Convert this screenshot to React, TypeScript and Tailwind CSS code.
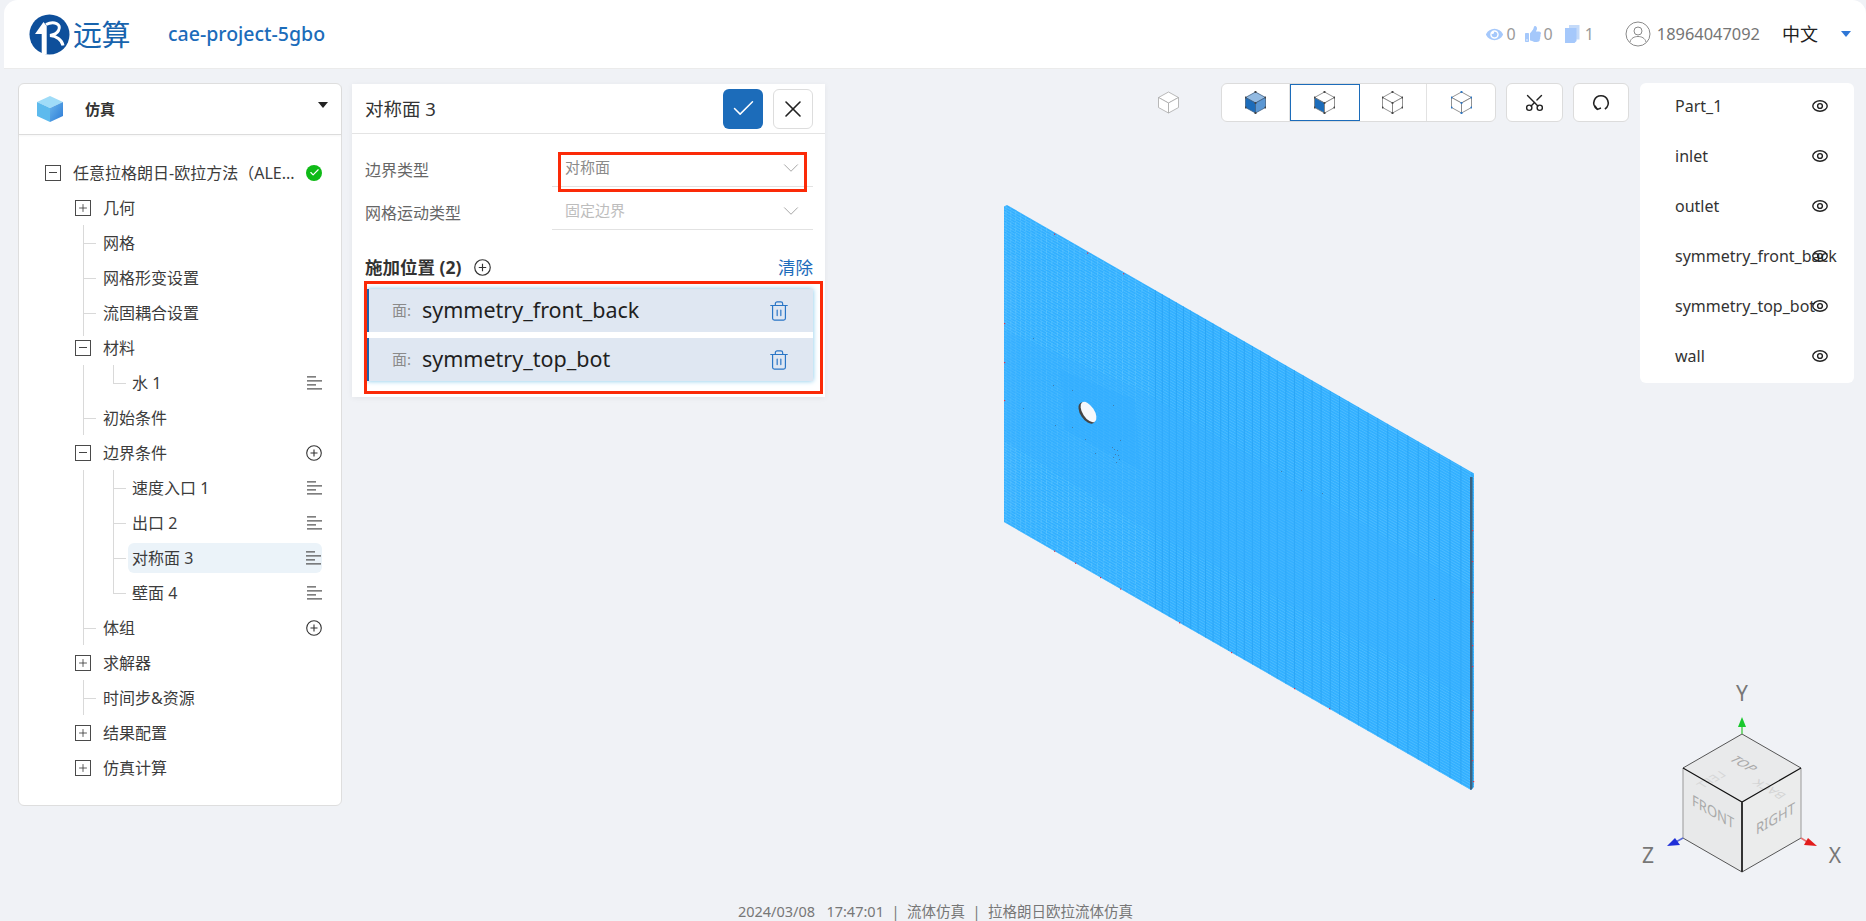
import { Check, ChevronDown, Plus, Scissors, Trash2, X } from "lucide-react";
import { FaEye, FaThumbsUp } from "react-icons/fa";
import type { ReactNode } from "react";

const FONT = "font-['Noto_Sans','Noto_Sans_CJK_SC',sans-serif]";

const Toggle = ({ open }: { open?: boolean }) => (
  <span className="relative flex h-[16px] w-[16px] shrink-0 items-center justify-center border-[1.5px] border-[#4a4a4a] bg-white">
    {open ? <Minus /> : <PlusMark />}
  </span>
);
const Minus = () => <span className="h-[1.5px] w-[8px] bg-[#444]" />;
const PlusMark = () => <Plus size={12} strokeWidth={1.6} className="text-[#333]" />;

const MenuIcon = () => (
  <svg width="15" height="14" viewBox="0 0 15 14" className="shrink-0">
    <path d="M0 .8h9M0 4.8h15M0 8.8h9M0 12.8h15" stroke="#555" strokeWidth="1.2" fill="none" />
  </svg>
);

const PlusCircle = ({ size = 16 }: { size?: number }) => (
  <svg width={size} height={size} viewBox="0 0 16 16" className="shrink-0">
    <circle cx="8" cy="8" r="7.3" fill="none" stroke="#333" strokeWidth="1.1" />
    <path d="M8 4.5v7M4.5 8h7" stroke="#333" strokeWidth="1.1" />
  </svg>
);

type RowProps = {
  pad: string;
  children: ReactNode;
  toggle?: "open" | "closed";
  right?: ReactNode;
  guides?: ReactNode;
};

// one line of the tree, guides are the thin connector lines
function Row({ pad, children, toggle, right, guides }: RowProps) {
  return (
    <div className={`relative flex h-[35px] items-center pr-[19px] text-[16px] text-[#3c3c3c] ${pad}`}>
      {guides}
      {toggle && (
        <span className="mr-[12px]">
          <Toggle open={toggle === "open"} />
        </span>
      )}
      <span className="whitespace-nowrap">{children}</span>
      {right && <span className="ml-auto flex items-center">{right}</span>}
    </div>
  );
}

const Line1 = () => <span className="absolute left-[64px] top-0 h-full w-px bg-[#d9d9d9]" />;
const Line2 = () => <span className="absolute left-[94px] top-0 h-full w-px bg-[#d9d9d9]" />;
const Line2Half = () => <span className="absolute left-[94px] top-0 h-1/2 w-px bg-[#d9d9d9]" />;
const Tick1 = () => <span className="absolute left-[64px] top-1/2 h-px w-[13px] bg-[#d9d9d9]" />;
const Tick2 = () => <span className="absolute left-[94px] top-1/2 h-px w-[13px] bg-[#d9d9d9]" />;

function Tree() {
  return (
    <div className="pt-[20px]">
      <Row
        pad="pl-[26px]"
        toggle="open"
        right={
          <span className="flex h-[16px] w-[16px] items-center justify-center rounded-full bg-[#0fba17]">
            <Check size={11} strokeWidth={2.5} className="text-white" />
          </span>
        }
      >
        任意拉格朗日-欧拉方法（ALE...
      </Row>
      <Row pad="pl-[56px]" toggle="closed">几何</Row>
      <Row pad="pl-[84px]" guides={<><Line1 /><Tick1 /></>}>网格</Row>
      <Row pad="pl-[84px]" guides={<><Line1 /><Tick1 /></>}>网格形变设置</Row>
      <Row pad="pl-[84px]" guides={<><Line1 /><Tick1 /></>}>流固耦合设置</Row>
      <Row pad="pl-[56px]" toggle="open" guides={<span className="absolute left-[64px] top-0 h-[6px] w-px bg-[#d9d9d9]" />}>材料</Row>
      <Row pad="pl-[113px]" right={<MenuIcon />} guides={<><Line1 /><Line2Half /><Tick2 /></>}>水 1</Row>
      <Row pad="pl-[84px]" guides={<><Line1 /><Tick1 /></>}>初始条件</Row>
      <Row pad="pl-[56px]" toggle="open" right={<PlusCircle />}>边界条件</Row>
      <Row pad="pl-[113px]" right={<MenuIcon />} guides={<><Line1 /><Line2 /><Tick2 /></>}>速度入口 1</Row>
      <Row pad="pl-[113px]" right={<MenuIcon />} guides={<><Line1 /><Line2 /><Tick2 /></>}>出口 2</Row>
      <div className="relative flex h-[35px] items-center">
        <Line1 />
        <Line2 />
        <Tick2 />
        <div className="ml-[109px] flex h-[30px] w-[194px] items-center justify-between rounded-[6px] bg-[#ebf3f9] pl-[4px] pr-[1px] text-[16px] text-[#3c3c3c]">
          对称面 3
          <MenuIcon />
        </div>
      </div>
      <Row pad="pl-[113px]" right={<MenuIcon />} guides={<><Line1 /><Line2Half /><Tick2 /></>}>壁面 4</Row>
      <Row pad="pl-[84px]" right={<PlusCircle />} guides={<><Line1 /><Tick1 /></>}>体组</Row>
      <Row pad="pl-[56px]" toggle="closed">求解器</Row>
      <Row pad="pl-[84px]" guides={<><Line1 /><Tick1 /></>}>时间步&amp;资源</Row>
      <Row pad="pl-[56px]" toggle="closed">结果配置</Row>
      <Row pad="pl-[56px]" toggle="closed">仿真计算</Row>
    </div>
  );
}

const Logo = () => (
  <svg width="41" height="41" viewBox="0 0 41 41" className="shrink-0">
    <circle cx="20.5" cy="20.5" r="20" fill="#0e4f9b" />
    <path d="M14.5 8 6 20h6.700v20.500h5V12z" fill="#fff" />
    <path d="M17 10.500c8-4 16-.5 12.500 6-1.500 3-5 4.500-8.500 5 6 .5 12 4 13 10" fill="none" stroke="#fff" strokeWidth="3" />
  </svg>
);

function Header() {
  return (
    <header className="ml-[4px] flex h-[69px] shrink-0 items-center rounded-t-[14px] border-b border-[#ebebeb] bg-white pl-[25px] pr-[15px]">
      <Logo />
      <span className="ml-[3px] text-[29px] leading-none tracking-[-0.5px] text-[#1763ad]">远算</span>
      <span className="ml-[38px] text-[19.500px] font-medium text-[#1c6cba]">cae-project-5gbo</span>
      <div className="ml-auto flex items-center text-[16px] text-[#8a8a8a]">
        <FaEye size={17} className="text-[#a5c8fb]" />
        <span className="ml-[3px] text-[#9a9a9a]">0</span>
        <FaThumbsUp size={16} className="ml-[9px] text-[#a5c8fb]" />
        <span className="ml-[3px] text-[#9a9a9a]">0</span>
        <svg width="15" height="18" viewBox="0 0 15 18" className="ml-[12px]">
          <path d="M4 0h10.500v14.500H4z" fill="#c4daf9" />
          <path d="M0 3h11.500v13l-2 2H0z" fill="#a5c8fb" />
        </svg>
        <span className="ml-[5px] text-[#9a9a9a]">1</span>
        <svg width="26" height="26" viewBox="0 0 26 26" className="ml-[31px]">
          <circle cx="13" cy="13" r="12" fill="none" stroke="#8a8a8a" strokeWidth="1" />
          <circle cx="13" cy="10" r="4" fill="none" stroke="#8a8a8a" strokeWidth="1" />
          <path d="M5 21c1-4 4.500-5.500 8-5.500s7 1.500 8 5.500" fill="none" stroke="#8a8a8a" strokeWidth="1" />
        </svg>
        <span className="ml-[6px] text-[16.400px] text-[#757575]">18964047092</span>
        <span className="ml-[22px] text-[18px] text-[#222]">中文</span>
        <span className="ml-[23px] h-0 w-0 border-x-[5.500px] border-t-[6px] border-x-transparent border-t-[#2f77d6]" />
      </div>
    </header>
  );
}

const SimCube = () => (
  <svg width="26" height="26" viewBox="0 0 26 26">
    <defs>
      <linearGradient id="simRight" x1="0" y1="0" x2="1" y2="1">
        <stop offset="0" stopColor="#6ab6ec" />
        <stop offset="1" stopColor="#2c7ad6" />
      </linearGradient>
    </defs>
    <path d="M13 0 26 6 13 12 0 6z" fill="#9fdcf8" />
    <path d="M0 6 13 12v14L0 20z" fill="#5dbaed" />
    <path d="M26 6 13 12v14l13-6z" fill="url(#simRight)" />
  </svg>
);

function LeftPanel() {
  return (
    <aside className="h-[723px] w-[324px] shrink-0 rounded-[6px] border border-[#dedede] bg-white">
      <div className="flex h-[51px] items-center border-b border-[#dcdcdc] pl-[18px] pr-[13px] shadow-[0_1px_2px_rgba(0,0,0,0.04)]">
        <SimCube />
        <span className="ml-[22px] text-[15px] font-bold text-[#333]">仿真</span>
        <span className="mb-[9px] ml-auto h-0 w-0 border-x-[5.500px] border-t-[6px] border-x-transparent border-t-[#222]" />
      </div>
      <Tree />
    </aside>
  );
}

function FormRow({ label, value, muted }: { label: string; value: string; muted?: boolean }) {
  return (
    <div className="flex h-[43px] items-end pl-[13px] pr-[12px]">
      <span className="mb-[7px] w-[187px] text-[16px] leading-[20px] text-[#666]">{label}</span>
      <div className="flex h-[38px] flex-1 items-center justify-between border-b border-[#e2e2e2] pl-[13px] pr-[9px]">
        <span className={`text-[15px] ${muted ? "text-[#bdbdbd]" : "text-[#8a8a8a]"}`}>{value}</span>
        <ChevronDown size={26} strokeWidth={0.8} className="text-[#999]" />
      </div>
    </div>
  );
}

function TargetRow({ name }: { name: string }) {
  return (
    <div className="flex h-[43px] items-center border-l-2 border-[#1c62ac] bg-[#dfe7f2] pl-[23px] pr-[23px]">
      <span className="w-[30px] text-[15px] text-[#8a8a8a]">面:</span>
      <span className="text-[21.500px] text-[#1f1f1f]">{name}</span>
      <Trash2 size={22} strokeWidth={1.3} className="ml-auto text-[#2a76c6]" />
    </div>
  );
}

function DetailPanel() {
  return (
    <section className="relative ml-[10px] mt-px h-[313px] w-[473px] shrink-0 bg-white shadow-[0_1px_6px_rgba(0,0,0,0.06)]">
      <div className="flex h-[50px] items-center border-b border-[#e4e4e4] pl-[13px] pr-[12px]">
        <span className="text-[18.500px] text-[#333]">对称面 3</span>
        <button className="ml-auto flex h-[40px] w-[40px] items-center justify-center rounded-[6px] bg-[#1c6cba]">
          <Check size={27} strokeWidth={1.3} className="text-white" />
        </button>
        <button className="ml-[10px] flex h-[40px] w-[40px] items-center justify-center rounded-[6px] border border-[#ddd] bg-white">
          <X size={28} strokeWidth={1.4} className="text-[#222]" />
        </button>
      </div>
      <div className="pt-[10px]">
        <FormRow label="边界类型" value="对称面" />
        <FormRow label="网格运动类型" value="固定边界" muted />
      </div>
      <div className="mt-[20px] flex h-[34px] items-center pl-[13px] pr-[12px]">
        <span className="text-[17.500px] font-bold text-[#333]">施加位置 (2)</span>
        <span className="ml-[13px]"><PlusCircle size={17} /></span>
        <span className="ml-auto text-[17.500px] text-[#1c6cba]">清除</span>
      </div>
      <div className="ml-[15px] mr-[12px] mt-[5px] bg-white shadow-[0_0_5px_#7fc6ea]">
        <TargetRow name="symmetry_front_back" />
        <div className="h-[6px]" />
        <TargetRow name="symmetry_top_bot" />
      </div>
      <div className="absolute left-[206px] top-[68px] h-[40px] w-[249px] border-[3px] border-[#fb2a08]" />
      <div className="absolute left-[12px] top-[197px] h-[113px] w-[459px] border-[3px] border-[#fb2a08]" />
    </section>
  );
}

type CubeKind = "solid" | "face" | "wire" | "points";

function CubeIcon({ kind, muted }: { kind: CubeKind; muted?: boolean }) {
  const edge = muted ? "#a8a8a8" : kind === "solid" ? "#3d5f85" : "#777";
  const dot = kind === "points" ? "#2a76c6" : "#444";
  const verts = [[10, 1], [20, 6.5], [20, 16.5], [10, 22], [0, 16.5], [0, 6.5], [10, 12]];
  return (
    <svg width="21" height="23" viewBox="-0.500 0 21 23">
      <path d="M10 1 20 6.500 10 12 0 6.500z" fill={kind === "solid" ? "#94bbe2" : "#fff"} stroke={edge} strokeWidth=".8" />
      <path d="M0 6.500 10 12v10L0 16.500z" fill={kind === "solid" || kind === "face" ? "#1c6cba" : "#fff"} stroke={edge} strokeWidth=".8" />
      <path d="M20 6.500 10 12v10l10-5.500z" fill={kind === "solid" ? "#5b97d3" : "#fff"} stroke={edge} strokeWidth=".8" />
      {!muted && verts.map(([x, y]) => <circle key={`${x}-${y}`} cx={x} cy={y} r="1.100" fill={dot} />)}
    </svg>
  );
}

const ToolCell = ({ kind, active }: { kind: CubeKind; active?: boolean }) => (
  <div
    className={`flex h-full items-center justify-center ${
      active ? "h-[40px] w-[70px] border border-[#1c6cba]" : "w-[68px] border-r border-[#e2e2e2] last:border-r-0"
    }`}
  >
    <CubeIcon kind={kind} />
  </div>
);

function Toolbar() {
  return (
    <div className="flex h-[39px] items-center">
      <CubeIcon kind="wire" muted />
      <div className="ml-[42px] flex h-[39px] w-[275px] items-center rounded-[6px] border border-[#dcdcdc] bg-white">
        <ToolCell kind="solid" />
        <ToolCell kind="face" active />
        <ToolCell kind="wire" />
        <ToolCell kind="points" />
      </div>
      <button className="ml-[10px] flex h-[39px] w-[57px] items-center justify-center rounded-[6px] border border-[#dcdcdc] bg-white">
        <Scissors size={21} strokeWidth={1.6} className="-rotate-90 text-[#222]" />
      </button>
      <button className="ml-[10px] flex h-[39px] w-[56px] items-center justify-center rounded-[6px] border border-[#dcdcdc] bg-white">
        <svg width="20" height="20" viewBox="0 0 18 18" fill="none" stroke="#222" strokeWidth="1.500">
          <path d="M5.500 14.500C2.500 12.500 2 9 3 6.500 4.200 3.500 6.500 2.500 9 2.500s4.800 1 6 4c1 2.500.5 6-2.500 8" />
          <path d="M3.500 11.500 5.800 14.700 9 13.500" strokeWidth="1.300" />
        </svg>
      </button>
    </div>
  );
}

const PARTS = ["Part_1", "inlet", "outlet", "symmetry_front_back", "symmetry_top_bot", "wall"];

function PartList() {
  return (
    <div className="ml-[11px] h-[300px] w-[214px] shrink-0 rounded-[6px] bg-white">
      {PARTS.map((p) => (
        <div key={p} className="flex h-[50px] items-center pb-[5px] pl-[35px] pr-[26px] text-[16px] text-[#333]">
          <span className="w-[130px] whitespace-nowrap">{p}</span>
          <svg width="16" height="12" viewBox="0 0 16 12" fill="none" stroke="#222" strokeWidth="1.400" className="relative ml-auto">
            <ellipse cx="8" cy="6" rx="7.200" ry="5.200" />
            <circle cx="8" cy="6" r="2.400" />
          </svg>
        </div>
      ))}
    </div>
  );
}

const topY = (x: number) => 205 + (x - 1004) * 0.5725;
const botY = (x: number) => 522 + (x - 1004) * 0.5725;

// mesh plate in page coordinates
function MeshPlate() {
  const verticals: number[] = [];
  let x = 1006;
  while (x < 1472) {
    verticals.push(x);
    x += 4.8 + ((x - 1004) / 469) * 6.4;
  }
  const slants = Array.from({ length: 125 }, (_, i) => i * 2.75);
  const reds = [
    ...[1054, 1087, 1123].map((v) => [v, topY(v)]),
    ...[1054, 1075, 1100, 1120, 1179, 1231, 1294, 1329].map((v) => [v, botY(v)]),
    [1004, 323], [1004, 362], [1004, 400],
    [1472, 530], [1472, 561], [1472, 592], [1472, 621], [1472, 645], [1472, 666], [1472, 710], [1472, 760], [1473, 781],
  ];
  const specks = [
    [1053, 385], [1072, 390], [1113, 405], [1112, 447], [1120, 440], [1113, 457], [1117, 450], [1116, 462], [1072, 427],
    [1055, 425], [1033, 338], [1023, 408], [1085, 439], [1095, 453], [1281, 471], [1301, 490], [1322, 493], [1434, 599],
    [1114, 449], [1118, 455], [1115, 454], [1119, 459],
  ];
  return (
    <svg viewBox="1000 200 480 595" className="absolute left-[1000px] top-[200px] h-[595px] w-[480px]">
      <defs>
        <clipPath id="plateClip">
          <path d="M1004 206.500 1007 205 1474 473.500V787L1471 790 1004 522z" />
        </clipPath>
      </defs>
      <g clipPath="url(#plateClip)">
        <rect x="1000" y="200" width="480" height="595" fill="#36b0ff" />
        {slants.map((d) => (
          <line key={d} x1="1004" y1={206 + d} x2="1474" y2={475 + d} stroke="#62c6ff" strokeWidth="1" opacity=".6" />
        ))}
        {verticals.map((v) =>
          v < 1150 ? (
            <line key={v} x1={v} y1="200" x2={v} y2="795" stroke="#62c7ff" strokeDasharray="4 1.500" opacity=".6" />
          ) : (
            <line key={v} x1={v} y1="200" x2={v} y2="795" stroke="#2aa4f5" opacity=".85" />
          ),
        )}
        <path d="M1004 330 1060 355 1140 390 1473 590V700L1130 520 1004 440z" fill="#36b0ff" opacity=".4" />
        <path d="M1060 370 1135 400 1140 470 1065 430z" fill="#34aeff" opacity=".45" />
        <rect x="1470" y="477" width="2.500" height="313" fill="#3b6482" />
      </g>
      <ellipse cx="1087" cy="413" rx="6.500" ry="12" transform="rotate(-33 1087 413)" fill="#444" />
      <ellipse cx="1088.500" cy="412" rx="5.800" ry="11.500" transform="rotate(-33 1088.500 412)" fill="#f6f8fc" />
      {specks.map(([sx, sy]) => (
        <rect key={`${sx}-${sy}`} x={sx} y={sy} width="1" height="1" fill="#3f7fb0" />
      ))}
      {reds.map(([sx, sy]) => (
        <rect key={`${sx}-${sy}`} x={sx} y={sy} width="1.200" height="1.200" fill="#e0304a" />
      ))}
    </svg>
  );
}

function ViewCube() {
  return (
    <svg viewBox="1600 670 266 210" className="absolute left-[1600px] top-[670px] h-[210px] w-[266px] font-['Noto_Sans',sans-serif]">
      <path d="M1742 734 1801 768 1742 802 1683 768z" fill="#e9eaeb" />
      <path d="M1683 768 1742 802V872L1683 838z" fill="#e8e9ea" />
      <path d="M1801 768 1742 802V872L1801 838z" fill="#ebecec" />
      <g fill="#a9a9a9" fontSize="14">
        <text transform="matrix(.87 .5 -.75 .5 1729 760)" fontStyle="italic">TOP</text>
        <text transform="matrix(.87 .5 0 1 1692 805)" fontSize="15">FRONT</text>
        <text transform="matrix(.87 -.5 0 1 1756 835)" fontSize="15">RIGHT</text>
        <text transform="matrix(-.87 -.5 .75 -.5 1787 795)" fontSize="13" opacity=".35">BACK</text>
        <text transform="matrix(-.87 .5 .75 .5 1727 775)" fontSize="13" opacity=".3">LEFT</text>
      </g>
      <path d="M1742 734 1801 768M1742 734 1683 768M1683 838 1742 872 1801 838" stroke="#444" strokeWidth=".9" fill="none" />
      <path d="M1683 768V838M1801 768V838" stroke="#999" strokeWidth="1" fill="none" />
      <path d="M1683 768 1742 802 1801 768" stroke="#111" strokeWidth="1.100" fill="none" />
      <path d="M1742 802V872" stroke="#333" strokeWidth="2" />
      <path d="M1742 734V722" stroke="#57cc57" strokeWidth="1.500" />
      <path d="M1742 717 1746 727H1738z" fill="#19c82d" />
      <path d="M1683 838 1674 843" stroke="#5a6cd8" strokeWidth="1.500" />
      <path d="M1667 846 1675 838 1680 845z" fill="#1f2fd8" />
      <path d="M1801 838 1809 843" stroke="#e87070" strokeWidth="1.500" />
      <path d="M1817 846 1808 838 1804 845z" fill="#e21c1c" />
      <g fill="#777" fontSize="21" textAnchor="middle">
        <text x="1742" y="701">Y</text>
        <text x="1648" y="863">Z</text>
        <text x="1835" y="863">X</text>
      </g>
    </svg>
  );
}

export default function App() {
  return (
    <div className={`relative flex h-[921px] w-[1866px] flex-col overflow-hidden bg-[#f0f2f6] ${FONT}`}>
      <Header />
      <MeshPlate />
      <ViewCube />
      <main className="relative flex flex-1 items-start pl-[18px] pt-[14px]">
        <LeftPanel />
        <DetailPanel />
        <div className="ml-[333px]">
          <Toolbar />
        </div>
        <PartList />
      </main>
      <footer className="flex h-[20px] shrink-0 items-start justify-center pl-[5px] text-[14.500px] leading-[20px] whitespace-pre text-[#777]">
        2024/03/08   17:47:01  |  流体仿真  |  拉格朗日欧拉流体仿真
      </footer>
    </div>
  );
}
